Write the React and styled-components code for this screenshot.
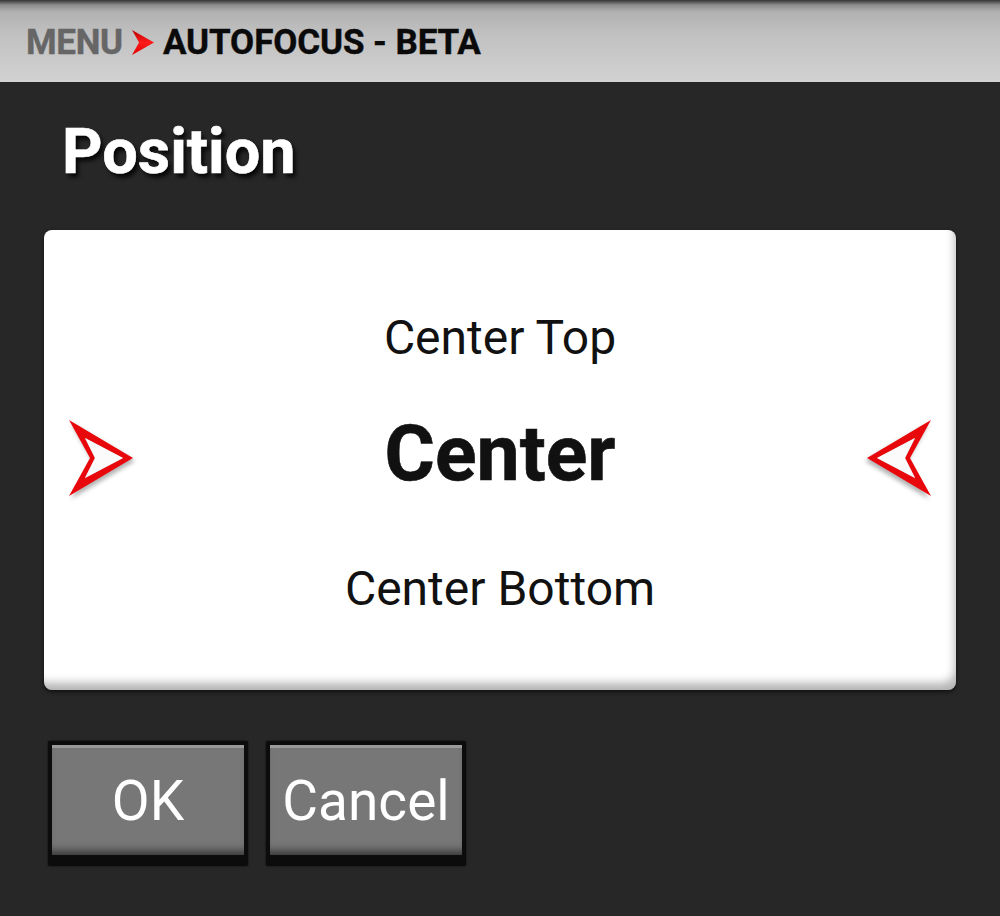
import React from "react";
import styled, { createGlobalStyle } from "styled-components";

const Global = createGlobalStyle`
  html, body { margin: 0; padding: 0; background: #272727; }
  body { font-family: Roboto, "Liberation Sans", Arial, sans-serif; }
  * { box-sizing: border-box; }
`;

const Screen = styled.div`
  width: 1000px;
  height: 916px;
  background: #272727;
  display: flex;
  flex-direction: column;
  overflow: hidden;
`;

const Header = styled.header`
  height: 82px;
  flex: none;
  display: flex;
  align-items: center;
  gap: 8px;
  padding: 2px 0 0 26px;
  background:
    linear-gradient(to bottom, rgba(40,40,40,0.9) 0px, rgba(80,80,80,0.35) 5px, rgba(0,0,0,0) 12px),
    linear-gradient(to bottom, #a9a9a9 0%, #c0c0c0 40%, #d2d2d2 100%);
`;

const Crumb = styled.span`
  font-family: Roboto, "Liberation Sans", sans-serif;
  font-weight: 700;
  font-size: 35px;
  letter-spacing: ${(p) => (p.$muted ? "-0.3px" : "-0.1px")};
  color: ${(p) => (p.$muted ? "#666666" : "#0a0a0a")};
  line-height: 1;
  -webkit-text-stroke: 0.4px currentColor;
`;

const Title = styled.h1`
  margin: 0;
  padding: 38px 0 0 62px;
  height: 148px;
  font-family: Roboto, "Liberation Sans", sans-serif;
  font-weight: 700;
  font-size: 63px;
  line-height: 1;
  color: #ffffff;
  -webkit-text-stroke: 0.6px #ffffff;
  text-shadow: 3px 4px 4px rgba(0, 0, 0, 0.85);
`;

const Card = styled.section`
  margin: 0 44px;
  height: 460px;
  flex: none;
  background: #ffffff;
  border-radius: 8px;
  box-shadow:
    inset -6px -12px 10px -5px rgba(0, 0, 0, 0.3),
    0 2px 4px rgba(0, 0, 0, 0.6);
  display: flex;
  flex-direction: column;
  align-items: stretch;
  padding-top: 80px;
`;

const Option = styled.div`
  text-align: center;
  font-family: Roboto, "Liberation Sans", sans-serif;
  color: #111;
  font-size: ${(p) => (p.$selected ? "77px" : "48px")};
  font-weight: ${(p) => (p.$selected ? 700 : 400)};
  line-height: ${(p) => (p.$selected ? "90px" : "56px")};
  margin-top: ${(p) => p.$mt || 0}px;
  ${(p) => (p.$selected ? "-webkit-text-stroke: 0.6px #111;" : "")}
`;

const SelectRow = styled.div`
  display: flex;
  align-items: center;
  justify-content: space-between;
  padding: 0 24px 0 24px;
  margin-top: 43px;
`;

const ArrowSvg = styled.svg`
  width: 66px;
  height: 78px;
  flex: none;
  margin-top: 8px;
  filter: drop-shadow(2px 3px 2px rgba(0, 0, 0, 0.3));
  transform: ${(p) => (p.$flip ? "scaleX(-1)" : "none")};
`;

const Arrow = ({ flip }) => (
  <ArrowSvg $flip={flip} viewBox="0 0 66 78">
    <path
      d="M1 1 L65 39 L1 77 L22 39 Z M17 19 L55 39 L17 59 L27 39 Z"
      fill="#e8080c"
      fillRule="evenodd"
    />
    <path d="M17 19 L55 39 L17 59 L27 39 Z" fill="#fbfbfb" />
  </ArrowSvg>
);

const CrumbSvg = styled.svg`
  width: 24px;
  height: 27px;
  flex: none;
`;

const CrumbArrow = () => (
  <CrumbSvg viewBox="0 0 24 27">
    <defs>
      <linearGradient id="cg" x1="0" y1="0" x2="0" y2="1">
        <stop offset="0" stopColor="#b80000" />
        <stop offset="0.5" stopColor="#ff1a1a" />
        <stop offset="1" stopColor="#e00000" />
      </linearGradient>
    </defs>
    <path d="M1 1 L23 13.5 L1 26 L8 13.5 Z" fill="url(#cg)" />
  </CrumbSvg>
);

const ButtonRow = styled.div`
  display: flex;
  gap: 18px;
  padding: 51px 0 0 48px;
`;

const Button = styled.button`
  width: 200px;
  height: 125px;
  padding: 4px 4px 11px 4px;
  background: #0c0c0c;
  border: none;
  border-radius: 2px;
  box-shadow: 0 0 2px rgba(0, 0, 0, 0.8);
  cursor: pointer;
`;

const ButtonFace = styled.span`
  display: flex;
  align-items: center;
  justify-content: center;
  width: 100%;
  height: 100%;
  background: #777777;
  border-top: 3px solid #9a9a9a;
  box-shadow: inset 0 -10px 8px -6px rgba(0, 0, 0, 0.55);
  font-family: Roboto, "Liberation Sans", sans-serif;
  font-size: 55px;
  font-weight: 400;
  color: #ffffff;
  padding-bottom: 2px;
`;

export default function App() {
  return (
    <Screen>
      <Global />
      <Header>
        <Crumb $muted>MENU</Crumb>
        <CrumbArrow />
        <Crumb>AUTOFOCUS - BETA</Crumb>
      </Header>
      <Title>Position</Title>
      <Card>
        <Option>Center Top</Option>
        <SelectRow>
          <Arrow />
          <Option $selected>Center</Option>
          <Arrow flip />
        </SelectRow>
        <Option $mt={62}>Center Bottom</Option>
      </Card>
      <ButtonRow>
        <Button>
          <ButtonFace>OK</ButtonFace>
        </Button>
        <Button>
          <ButtonFace>Cancel</ButtonFace>
        </Button>
      </ButtonRow>
    </Screen>
  );
}
